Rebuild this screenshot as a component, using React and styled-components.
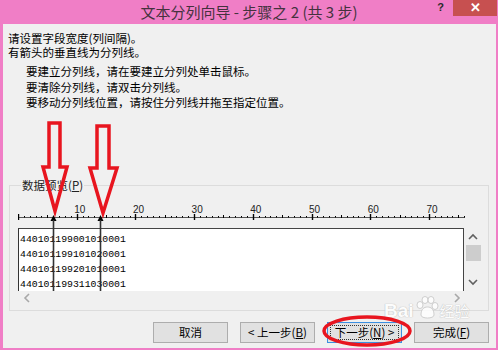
import React from "react";
import styled, { createGlobalStyle } from "styled-components";

const CHAR = 5.87;
const RULER_CHARS = 76;
const BREAKS = [6, 14];
const ROWS = [
  "440101199001010001",
  "440101199101020001",
  "440101199201010001",
  "440101199311030001",
];

const Global = createGlobalStyle`
  html, body { margin: 0; padding: 0; background: #fff; overflow: hidden; }
  * { box-sizing: border-box; }
`;

const Screen = styled.div`
  position: relative;
  width: 500px;
  height: 354px;
  background: #fff;
  font-family: "Noto Sans CJK SC", "Liberation Sans", sans-serif;
`;

const Window = styled.div`
  width: 498px;
  height: 350px;
  background: #f07ec6;
  display: flex;
  flex-direction: column;
`;

const TitleBar = styled.div`
  height: 24px;
  display: grid;
  grid-template-columns: 1fr auto 1fr;
  align-items: start;
`;

const Title = styled.div`
  grid-column: 2;
  font-size: 15px;
  line-height: 24px;
  color: #45323e;
  white-space: nowrap;
`;

const Controls = styled.div`
  grid-column: 3;
  justify-self: end;
  display: flex;
  align-items: flex-start;
  margin-right: 1px;
`;

const Help = styled.div`
  font-family: "Liberation Sans", sans-serif;
  font-weight: bold;
  font-size: 11px;
  line-height: 14px;
  color: #2a2a2a;
  margin-right: 9px;
`;

const Close = styled.div`
  width: 44px;
  height: 16px;
  background: #c75050;
  color: #fff;
  font-family: "Liberation Sans", sans-serif;
  font-weight: bold;
  font-size: 13px;
  line-height: 16px;
  text-align: center;
`;

const Body = styled.div`
  flex: 1;
  margin: 0 2px 2px 3px;
  background: #f0f0f0;
  display: flex;
  flex-direction: column;
  padding-top: 6.5px;
  color: #000;
  font-size: 11.5px;
`;

const Intro = styled.div`
  margin-left: 5px;
  line-height: 14.5px;
`;

const Instructions = styled.div`
  margin: 4.5px 0 0 23px;
  line-height: 15.5px;
`;

const Group = styled.fieldset`
  margin: 67px 0 0 6px;
  width: 480px;
  border: 1px solid #dcdcdc;
  padding: 9.5px 6px 5px 8px;
  min-width: 0;
`;

const Legend = styled.legend`
  margin-left: 3px;
  padding: 0 1px;
  font-size: 11.5px;
  line-height: 15px;
  color: #222;
`;

const PreviewArea = styled.div`
  position: relative;
  width: 464px;
`;

const RulerSvg = styled.svg`
  display: block;
  width: 464px;
  height: 20px;
  margin-bottom: 6px;
`;

const Preview = styled.div`
  display: grid;
  grid-template-columns: 446px 18px;
  grid-template-rows: 63px 14px;
`;

const TextArea = styled.div`
  background: #fff;
  border-top: 1px solid #444;
  border-left: 1px solid #333;
  border-right: 1px solid #444;
  padding: 3px 0 0 1px;
  font-family: "Liberation Mono", monospace;
  font-size: 9.8px;
  line-height: 15px;
  color: #000;
  overflow: hidden;
`;

const VScroll = styled.div`
  display: flex;
  flex-direction: column;
  align-items: center;
  padding-top: 5px;
`;

const Thumb = styled.div`
  width: 15px;
  height: 16px;
  background: #cdcdcd;
  margin: 4px 0 0 1px;
`;

const Spacer = styled.div`
  flex: ${(p) => p.$flex || "1"};
`;

const HScroll = styled.div`
  grid-column: 1 / span 2;
  display: flex;
  justify-content: space-between;
  align-items: center;
  padding: 0 21px 0 5px;
`;

const Breaks = styled.svg`
  position: absolute;
  left: 0;
  top: 0;
  pointer-events: none;
`;

const ButtonRow = styled.div`
  display: flex;
  justify-content: flex-end;
  gap: 12px;
  margin: 11px 7px 0 0;
`;

const Button = styled.div`
  position: relative;
  width: 75px;
  height: 21px;
  border: 1px solid ${(p) => (p.$focused ? "#3c8fe0" : "#adadad")};
  background: #e1e1e1;
  font-size: 11.5px;
  line-height: 19px;
  text-align: center;
  color: #000;
  white-space: nowrap;
  &::after {
    content: "";
    display: ${(p) => (p.$focused ? "block" : "none")};
    position: absolute;
    inset: 2px;
    border: 1px dotted #333;
  }
`;

const Annotations = styled.svg`
  position: absolute;
  left: 0;
  top: 0;
  pointer-events: none;
`;

const Watermark = styled.div`
  position: absolute;
  left: 384px;
  top: 296px;
  display: flex;
  align-items: flex-end;
  gap: 1px;
  color: #fff;
  text-shadow: 0 0 1px #b8b8b8, 0 0 1px #b8b8b8;
  opacity: 0.85;
  pointer-events: none;
`;

const WmLatin = styled.span`
  font-family: "Liberation Sans", sans-serif;
  font-weight: bold;
  font-size: 19px;
  line-height: 19px;
`;

const WmCjk = styled.span`
  font-size: 15px;
  line-height: 15px;
  margin-bottom: 2px;
`;

function Chevron({ dir, color = "#606060" }) {
  const pts = {
    up: "1,6 5,2 9,6",
    down: "1,2 5,6 9,2",
    left: "6,1 2,5 6,9",
    right: "2,1 6,5 2,9",
  }[dir];
  const vertical = dir === "up" || dir === "down";
  return (
    <svg width={vertical ? 10 : 8} height={vertical ? 8 : 10} style={{ display: "block" }}>
      <polyline points={pts} fill="none" stroke={color} strokeWidth="1.6" />
    </svg>
  );
}

function Ruler() {
  const ticks = [];
  for (let i = 0; i <= RULER_CHARS; i++) {
    const x = Math.round(i * CHAR) + 0.5;
    if (i % 10 === 0) ticks.push(<line key={i} x1={x} x2={x} y1={12} y2={18} stroke="#000" strokeWidth="1.4" />);
    else if (i % 5 === 0) ticks.push(<line key={i} x1={x} x2={x} y1={13} y2={16} stroke="#000" />);
    else ticks.push(<line key={i} x1={x} x2={x} y1={14} y2={15.5} stroke="#000" />);
  }
  const labels = [10, 20, 30, 40, 50, 60, 70].map((n) => (
    <text key={n} x={n * CHAR - 2.5} y={11} fontSize="10" fontFamily="Liberation Sans, sans-serif" fill="#222">
      {n}
    </text>
  ));
  return (
    <RulerSvg viewBox="0 0 464 20">
      <line x1={0} x2={447} y1={15.5} y2={15.5} stroke="#555" strokeWidth="1" />
      {ticks}
      {labels}
    </RulerSvg>
  );
}

function BreakLines() {
  return (
    <Breaks width="464" height="90" viewBox="0 0 464 90">
      {BREAKS.map((b) => {
        const x = Math.round(b * CHAR) + 0.5;
        return (
          <g key={b}>
            <polygon points={`${x},13 ${x - 3},19 ${x + 3},19`} fill="#000" />
            <line x1={x} x2={x} y1={18} y2={89} stroke="#333" strokeWidth="1.6" />
          </g>
        );
      })}
    </Breaks>
  );
}

export default function App() {
  return (
    <>
      <Global />
      <Screen>
        <Window>
          <TitleBar>
            <Title>文本分列向导 - 步骤之 2 (共 3 步)</Title>
            <Controls>
              <Help>?</Help>
              <Close>✕</Close>
            </Controls>
          </TitleBar>
          <Body>
            <Intro>
              <div>请设置字段宽度(列间隔)。</div>
              <div>有箭头的垂直线为分列线。</div>
            </Intro>
            <Instructions>
              <div>要建立分列线，请在要建立分列处单击鼠标。</div>
              <div>要清除分列线，请双击分列线。</div>
              <div>要移动分列线位置，请按住分列线并拖至指定位置。</div>
            </Instructions>
            <Group>
              <Legend>
                数据预览(<u>P</u>)
              </Legend>
              <PreviewArea>
                <Ruler />
                <Preview>
                  <TextArea>
                    {ROWS.map((r) => (
                      <div key={r}>{r}</div>
                    ))}
                  </TextArea>
                  <VScroll>
                    <Chevron dir="up" />
                    <Thumb />
                    <Spacer />
                    <Chevron dir="down" />
                    <Spacer $flex="0 0 5px" />
                  </VScroll>
                  <HScroll>
                    <Chevron dir="left" color="#a8a8a8" />
                    <Chevron dir="right" color="#a8a8a8" />
                  </HScroll>
                </Preview>
                <BreakLines />
              </PreviewArea>
            </Group>
            <ButtonRow>
              <Button>取消</Button>
              <Button>
                &lt; 上一步(<u>B</u>)
              </Button>
              <Button $focused>
                下一步(<u>N</u>) &gt;
              </Button>
              <Button>
                完成(<u>F</u>)
              </Button>
            </ButtonRow>
          </Body>
        </Window>
        <Watermark>
          <WmLatin>Bai</WmLatin>
          <svg width="24" height="24" viewBox="0 0 24 24" style={{ display: "block" }}>
            <g fill="#fff" stroke="#bcbcbc" strokeWidth="0.8">
              <ellipse cx="5" cy="9" rx="3" ry="3.5" />
              <ellipse cx="10" cy="4" rx="3" ry="3.5" />
              <ellipse cx="16" cy="4" rx="3" ry="3.5" />
              <ellipse cx="20" cy="10" rx="3" ry="3.5" />
              <path d="M6 19 C6 13 9 11 12.5 11 C16 11 19 13 19 19 C19 23 6 23 6 19 Z" />
            </g>
          </svg>
          <WmCjk>经验</WmCjk>
        </Watermark>
        <Annotations width="500" height="354" viewBox="0 0 500 354">
          <g fill="none" stroke="#e8151f" strokeWidth="3.5" strokeLinejoin="miter">
            <path d="M49 123 L60 123 L60 167 L67 167 L55 211 L43 167 L49 167 Z" />
            <path d="M97 126 L109 126 L109 168 L117 168 L103 213 L90 168 L97 168 Z" />
            <ellipse cx="367" cy="331" rx="43" ry="14" />
          </g>
        </Annotations>
      </Screen>
    </>
  );
}
